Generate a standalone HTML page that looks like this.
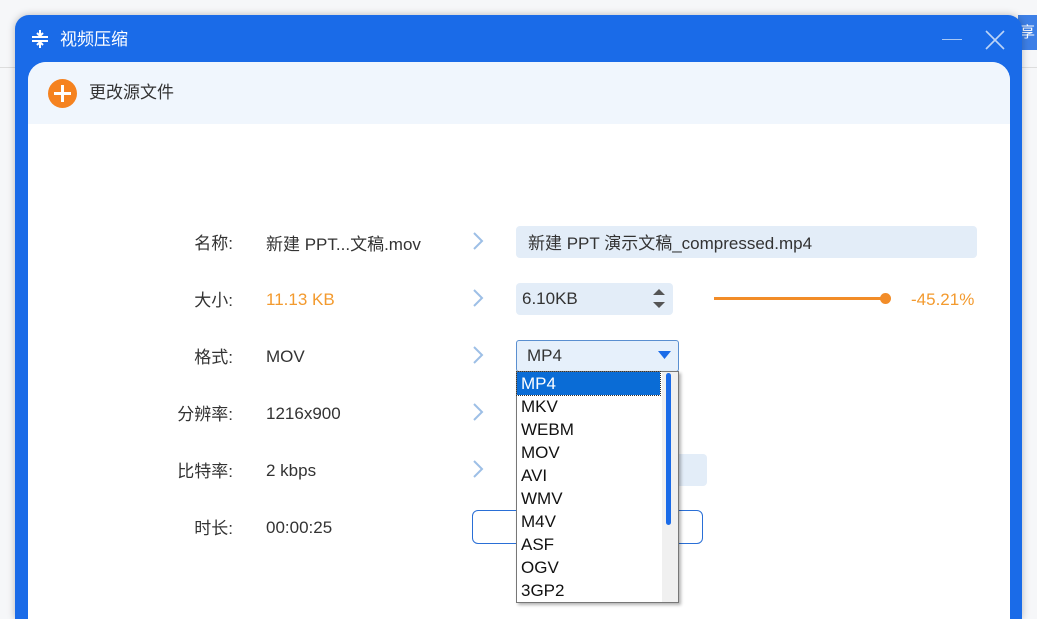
<!DOCTYPE html>
<html><head><meta charset="utf-8"><style>
*{margin:0;padding:0;box-sizing:border-box}
html,body{width:1037px;height:619px;overflow:hidden}
body{background:#f6f7f9;position:relative;font-family:"Liberation Sans","Noto Sans CJK SC",sans-serif;}
.abs{position:absolute}
.win{left:15px;top:15px;width:1007px;height:604px;background:#1a6be8;border-radius:14px 14px 0 0;box-shadow:0 0 8px rgba(0,0,0,.25)}
.panel{left:28px;top:62px;width:982px;height:557px;background:#fff;border-radius:18px 18px 0 0;overflow:hidden}
.hdr{left:0;top:0;width:982px;height:62px;background:#f0f6fd}
.lbl{width:120px;text-align:right;font-size:17px;color:#333;left:113px}
.val{left:266px;font-size:17px;color:#333}
.chev{left:470px;width:16px;height:20px}
.box{background:#e3edf8;border-radius:4px}
.dd div{height:23px;line-height:23px;padding-left:4px;font-size:17px;color:#111}
</style></head><body>
<div class="abs" style="left:0;top:67px;width:20px;height:1px;background:#ddd"></div>
<div class="abs" style="left:1018px;top:15px;width:19px;height:35px;background:#3d7fe6;color:#fff;font-size:15px;padding:6px 0 0 2px">享</div>
<div class="abs" style="left:1018px;top:67px;width:19px;height:1px;background:#ddd"></div>
<div class="abs win"></div>
<svg class="abs" style="left:31px;top:29px" width="18" height="20" viewBox="0 0 18 20"><path d="M1 8h16M1 12h16" stroke="#fff" stroke-width="2"/><path d="M9 1v5M6 4l3 3 3-3M9 19v-5M6 16l3-3 3 3" stroke="#fff" stroke-width="2" fill="none"/></svg>
<div class="abs" style="left:60px;top:25px;color:#fff;font-size:17px">视频压缩</div>
<div class="abs" style="left:942px;top:39px;width:20px;height:1px;background:#a9c8f5"></div>
<svg class="abs" style="left:985px;top:30px" width="20" height="20"><path d="M1 1L19 19M19 1L1 19" stroke="#bcd4f7" stroke-width="1.6"/></svg>
<div class="abs panel">
 <div class="abs hdr"></div>
 <div class="abs" style="left:20px;top:17px;width:29px;height:29px;border-radius:50%;background:#f5821f"></div>
 <div class="abs" style="left:26px;top:30px;width:17px;height:3px;background:#fff"></div>
 <div class="abs" style="left:33px;top:23px;width:3px;height:17px;background:#fff"></div>
 <div class="abs" style="left:61px;top:16px;font-size:17px;color:#333">更改源文件</div>
</div>
<div class="abs lbl" style="top:229px">名称:</div>
<div class="abs lbl" style="top:286px">大小:</div>
<div class="abs lbl" style="top:343px">格式:</div>
<div class="abs lbl" style="top:400px">分辨率:</div>
<div class="abs lbl" style="top:457px">比特率:</div>
<div class="abs lbl" style="top:514px">时长:</div>
<div class="abs val" style="top:230px">新建 PPT...文稿.mov</div>
<div class="abs val" style="top:290px;color:#f39a2e">11.13 KB</div>
<div class="abs val" style="top:347px">MOV</div>
<div class="abs val" style="top:404px">1216x900</div>
<div class="abs val" style="top:461px">2 kbps</div>
<div class="abs val" style="top:518px">00:00:25</div>
<svg class="abs chev" style="top:231px" viewBox="0 0 16 20"><path d="M4 2l8 8-8 8" stroke="#9dbfe6" stroke-width="2" fill="none"/></svg>
<svg class="abs chev" style="top:288px" viewBox="0 0 16 20"><path d="M4 2l8 8-8 8" stroke="#9dbfe6" stroke-width="2" fill="none"/></svg>
<svg class="abs chev" style="top:345px" viewBox="0 0 16 20"><path d="M4 2l8 8-8 8" stroke="#9dbfe6" stroke-width="2" fill="none"/></svg>
<svg class="abs chev" style="top:402px" viewBox="0 0 16 20"><path d="M4 2l8 8-8 8" stroke="#9dbfe6" stroke-width="2" fill="none"/></svg>
<svg class="abs chev" style="top:459px" viewBox="0 0 16 20"><path d="M4 2l8 8-8 8" stroke="#9dbfe6" stroke-width="2" fill="none"/></svg>
<div class="abs box" style="left:516px;top:226px;width:461px;height:32px;padding:3px 12px;font-size:17px;color:#333">新建 PPT 演示文稿_compressed.mp4</div>
<div class="abs box" style="left:516px;top:283px;width:157px;height:32px;padding:6px 6px;font-size:17px;color:#333">6.10KB</div>
<svg class="abs" style="left:652px;top:287px" width="14" height="24"><path d="M1 8L7 2 13 8z M1 15L7 21 13 15z" fill="#555"/></svg>
<div class="abs" style="left:714px;top:297px;width:172px;height:3px;background:#f28c28"></div>
<div class="abs" style="left:880px;top:293px;width:11px;height:11px;border-radius:50%;background:#f28c28"></div>
<div class="abs" style="left:911px;top:290px;font-size:17px;color:#f39a2e">-45.21%</div>
<div class="abs box" style="left:660px;top:454px;width:47px;height:32px"></div>
<div class="abs" style="left:472px;top:510px;width:231px;height:34px;border:1px solid #2a6fd6;border-radius:6px"></div>
<div class="abs" style="left:516px;top:340px;width:163px;height:32px;background:#e6f0fb;border:1px solid #5a8fd0;border-radius:3px;padding:5px 10px;font-size:17px;color:#333">MP4</div>
<svg class="abs" style="left:658px;top:351px" width="13" height="9"><path d="M0 0h13L6.5 8z" fill="#1a6be8"/></svg>
<div class="abs dd" style="left:516px;top:371px;width:163px;height:232px;background:#fff;border:1px solid #777;box-shadow:2px 2px 3px rgba(0,0,0,.3);padding-top:0">
 <div style="background:#0a6cd6;color:#fff;width:143px;outline:1px dotted #333">MP4</div>
 <div>MKV</div><div>WEBM</div><div>MOV</div><div>AVI</div><div>WMV</div><div>M4V</div><div>ASF</div><div>OGV</div><div>3GP2</div>
</div>
<div class="abs" style="left:662px;top:372px;width:16px;height:230px;background:#f0f0f0"></div>
<div class="abs" style="left:666px;top:373px;width:5px;height:152px;background:#1a6be8;border-radius:3px"></div>
</body></html>
